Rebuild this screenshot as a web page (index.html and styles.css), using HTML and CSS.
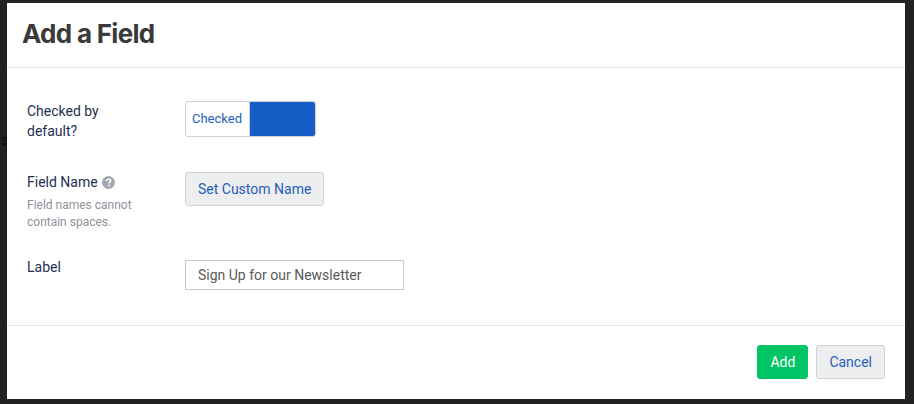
FILE: index.html
```
<!DOCTYPE html>
<html lang="en">
<head>
<meta charset="utf-8">
<title>Add a Field</title>
<link rel="stylesheet" href="styles.css">
</head>
<body>
<span class="backdrop-letter">s</span>
<div class="modal">
  <header class="modal-header"><h1>Add a Field</h1></header>
  <main class="modal-body">
    <div class="row row-toggle">
      <div class="label-col"><label>Checked by default?</label></div>
      <div class="toggle"><span class="toggle-text">Checked</span><span class="toggle-knob"></span></div>
    </div>
    <div class="row row-name">
      <div class="label-col">
        <label>Field Name <svg class="help" viewBox="0 0 12 12" width="13" height="13"><circle cx="6" cy="6" r="6" fill="#a4a7ad"/><path d="M4.1 4.7c0-1.1.8-1.8 1.9-1.8s1.9.7 1.9 1.6c0 1.3-1.4 1.2-1.4 2.4" fill="none" stroke="#fff" stroke-width="1.4"/><rect x="5.7" y="8" width="1.6" height="1.5" fill="#fff"/></svg></label>
        <p class="hint">Field names cannot contain spaces.</p>
      </div>
      <button class="btn btn-light" type="button">Set Custom Name</button>
    </div>
    <div class="row row-label">
      <div class="label-col"><label>Label</label></div>
      <input class="text-input" type="text" value="Sign Up for our Newsletter">
    </div>
  </main>
  <footer class="modal-footer">
    <button class="btn btn-green" type="button">Add</button>
    <button class="btn btn-light" type="button">Cancel</button>
  </footer>
</div>
</body>
</html>
```
FILE: styles.css
```
* { box-sizing: border-box; }
html, body { height: 100%; }
body {
  margin: 0;
  padding: 3px 9px 5px 7px;
  background: #222;
  font-family: Roboto, "Liberation Sans", sans-serif;
  font-size: 14px;
  overflow: hidden;
  position: relative;
}
.backdrop-letter {
  position: absolute;
  left: 1px;
  top: 132px;
  color: #0c0c0c;
  font-size: 14px;
}
.modal {
  position: relative;
  width: 898px;
  height: 396px;
  background: #fff;
  display: flex;
  flex-direction: column;
}
.modal-header {
  height: 65px;
  border-bottom: 1px solid #e4e4e4;
  padding: 15px 15px 0;
}
.modal-header h1 {
  margin: 0;
  font-family: Inter, sans-serif;
  font-size: 26px;
  line-height: 32px;
  font-weight: 700;
  letter-spacing: -0.7px;
  color: #3a3a3a;
}
.modal-body {
  height: 257px;
  padding: 33px 20px 0;
  display: flex;
  flex-direction: column;
}
.row { display: flex; align-items: flex-start; }
.row-toggle { height: 71px; }
.row-name { height: 85px; }
.label-col { width: 158px; }
.label-col label {
  display: block;
  width: 110px;
  color: #1f2f50;
  line-height: 20px;
}
.row-name .label-col label { width: auto; }
.help { vertical-align: -2px; margin-left: 1px; }
.hint {
  margin: 5px 0 0;
  width: 125px;
  font-size: 12px;
  line-height: 17px;
  color: #8f9299;
}
.toggle {
  display: flex;
  width: 131px;
  height: 36px;
  border: 1px solid #ccd0d6;
  border-radius: 3px;
  overflow: hidden;
  background: #fff;
}
.toggle-text {
  width: 64px;
  padding-left: 6px;
  font-size: 13px;
  line-height: 34px;
  color: #2560b8;
  border-right: 1px solid #ccd0d6;
}
.toggle-knob { flex: 1; background: #155cc4; }
.btn {
  font-family: inherit;
  font-size: 14px;
  height: 34px;
  border-radius: 3px;
  padding: 0 12px;
  cursor: pointer;
}
.btn-light {
  background: #edeef0;
  border: 1px solid #d0d3d9;
  color: #2560b8;
}
.btn-green {
  background: #00c566;
  border: 1px solid #00c566;
  color: #fff;
}
.text-input {
  width: 219px;
  height: 30px;
  margin-top: 3px;
  border: 1px solid #c8c8c8;
  padding: 0 12px;
  font-family: inherit;
  font-size: 14px;
  color: #5a5a5a;
}
.modal-footer {
  flex: 1;
  border-top: 1px solid #e4e4e4;
  display: flex;
  justify-content: flex-end;
  gap: 8px;
  padding: 19px 20px 0;
}
```
